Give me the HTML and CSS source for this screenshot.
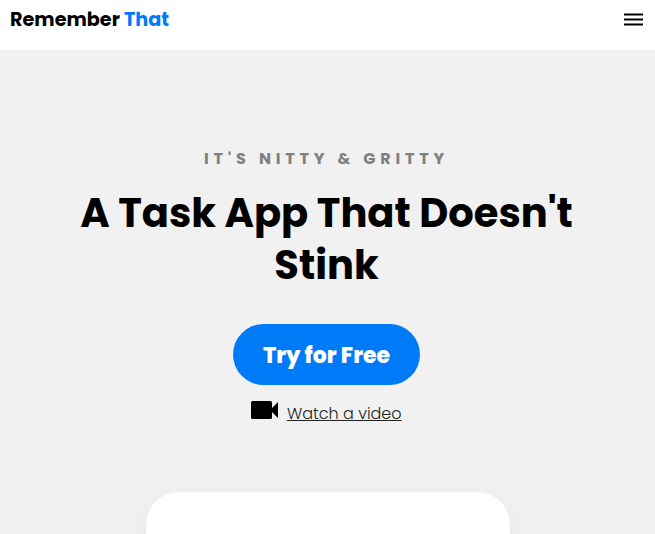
FILE: index.html
```html
<!DOCTYPE html>
<html lang="en">
<head>
<meta charset="utf-8">
<title>Remember That</title>
<link rel="stylesheet" href="styles.css">
</head>
<body>
<header class="nav">
  <div class="brand">Remember <span class="accent">That</span></div>
  <svg class="menu" viewBox="0 0 19 13"><path d="M0 .5h19v2H0zM0 5.500h19v2H0zM0 10.500h19v2H0z"/></svg>
</header>
<main class="hero">
  <p class="eyebrow">IT'S NITTY &amp; GRITTY</p>
  <h1>A Task App That Doesn't Stink</h1>
  <a class="cta">Try for Free</a>
  <div class="video">
    <svg class="camera" viewBox="0 0 27 18"><path d="M1.500 0h18Q21 0 21 1.500V7l6-6v16l-6-6v5.500Q21 18 19.500 18h-18Q0 18 0 16.500v-15Q0 0 1.500 0z"/></svg>
    <a class="watch">Watch a video</a>
  </div>
  <div class="card"></div>
</main>
</body>
</html>
```
FILE: styles.css
```css
* { box-sizing: border-box; }
body {
  margin: 0;
  height: 534px;
  overflow: hidden;
  background: #f1f1f1;
  font-family: Poppins, Inter, "Open Sans", sans-serif;
  color: #000;
}
.nav {
  height: 50px;
  background: #fff;
  display: flex;
  justify-content: space-between;
  padding: 5px 12px 0 10px;
}
.brand { font-size: 19.2px; line-height: 29px; font-weight: 700; white-space: nowrap; }
.accent { color: #007bf7; }
.menu { width: 19px; height: 13px; margin-top: 8px; }
.hero {
  height: 484px;
  display: flex;
  flex-direction: column;
  align-items: center;
  padding: 97px 2px 0 0;
  overflow: hidden;
}
.eyebrow { margin: 0; font-size: 16px; line-height: 24px; font-weight: 700; letter-spacing: 4.8px; color: #808080; }
h1 { margin: 16px 0 0; width: 520px; font-size: 40px; line-height: 52px; font-weight: 700; text-align: center; }
.cta {
  margin-top: 33px;
  width: 187px;
  height: 61px;
  border-radius: 31px;
  background: #007bf7;
  color: #fff;
  font-size: 22px;
  font-weight: 800;
  line-height: 63px;
  text-align: center;
}
.video { display: flex; margin-top: 16px; gap: 8.5px; }
.camera { width: 27px; height: 18px; }
.watch { margin-top: 1px; font-size: 16px; line-height: 24px; font-weight: 300; text-decoration: underline; color: #222; }
.card {
  flex: none;
  margin: 66px 0 0 2px;
  width: 364px;
  height: 200px;
  border: 1px solid #fafafa;
  border-bottom: 0;
  border-radius: 32px;
  background: #fff;
  box-shadow: 0 10px 30px rgba(0, 0, 0, .06);
}
```
